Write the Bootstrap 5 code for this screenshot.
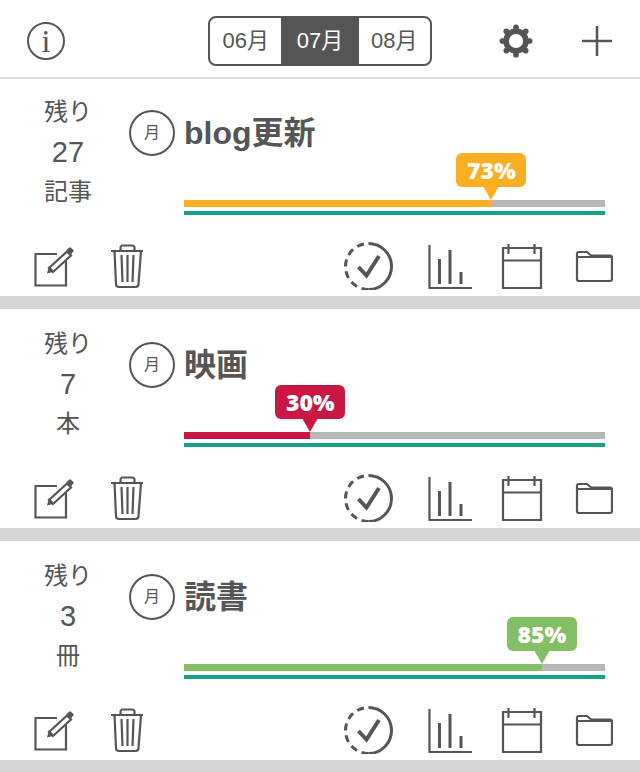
<!DOCTYPE html>
<html lang="en">
<head>
    <meta charset="UTF-8">
    <meta name="viewport" content="width=device-width, initial-scale=1.0">
    <title>Goals</title>
    <link href="https://cdn.jsdelivr.net/npm/bootstrap@5.3.1/dist/css/bootstrap.min.css" rel="stylesheet">
    <style>
        body {
            font-family: "Liberation Sans", "Noto Sans CJK JP", sans-serif;
            color: #555;
            background: #fff;
            overflow: hidden;
        }

        .top-bar {
            height: 79px;
            padding-left: 27px;
            padding-top: 4px;
            border-bottom: 2px solid #ddd;
        }

        .info-btn {
            width: 38px;
            height: 38px;
            border: 2px solid #555;
            font-family: "Liberation Serif", serif;
            font-size: 32px;
            line-height: 1;
        }

        .month-group {
            width: 224px;
            height: 50px;
            margin-left: 143px;
        }

        .month-btn {
            --bs-btn-padding-x: 0;
            --bs-btn-padding-y: 0;
            --bs-btn-font-size: 22px;
            --bs-btn-color: #555;
            --bs-btn-border-color: #555;
            --bs-btn-border-width: 2px;
            --bs-btn-border-radius: 8px;
            --bs-btn-active-bg: #555;
            --bs-btn-active-color: #fff;
            --bs-btn-active-border-color: #555;
        }

        .gear-icon {
            margin-left: 67px;
        }

        .plus-icon {
            margin-left: 49px;
        }

        .goal-card {
            height: 232px;
            border-bottom: 13px solid #d6d6d6;
            padding-top: 15px;
        }

        .goal-card.is-first {
            height: 230px;
            padding-top: 13px;
        }

        .remain-col {
            width: 136px;
            font-size: 24px;
            line-height: 40px;
        }

        .remain-num {
            font-size: 29px;
        }

        .goal-main {
            width: 477px;
            margin-left: -8px;
            padding-top: 18px;
        }

        .cycle-mark {
            width: 46px;
            height: 46px;
            margin-left: 1px;
            border: 2px solid #555;
            font-size: 16px;
        }

        .goal-name {
            margin: 0 0 0 9px;
            font-size: 32px;
            font-weight: 700;
            color: #555;
        }

        .bars {
            margin-top: 44px;
            margin-left: 56px;
        }

        .goal-progress {
            --bs-progress-height: 7px;
            --bs-progress-border-radius: 0;
            --bs-progress-bg: #b7b7b7;
        }

        .month-line {
            --bs-progress-height: 4px;
            --bs-progress-border-radius: 0;
            --bs-progress-bar-bg: #17a085;
            margin-top: 4px;
        }

        .tone-orange {
            --tone: #fbae22;
        }

        .tone-red {
            --tone: #cb1743;
        }

        .tone-green {
            --tone: #83c065;
        }

        .goal-progress .progress-bar {
            background: var(--tone);
        }

        .pct-tip {
            top: -47px;
            width: 70px;
            height: 34px;
            transform: translateX(-50%);
            background: var(--tone);
            border-radius: 6px;
            color: #fff;
            font-family: "Open Sans", sans-serif;
            font-weight: 800;
            font-size: 23px;
            line-height: 34px;
            text-align: center;
        }

        .pct-tip::after {
            content: "";
            position: absolute;
            left: 27px;
            top: 33px;
            border: 8px solid transparent;
            border-bottom-width: 0;
            border-top: 14px solid var(--tone);
        }

        .tool-row {
            margin-top: 27px;
            padding: 0 27px 0 33px;
        }

        .tool-row svg {
            display: block;
        }

        .line-icon {
            fill: none;
            stroke: #555;
            stroke-width: 2.2;
        }

        .line-heavy {
            stroke-width: 3;
        }

        .line-dash {
            stroke-width: 3;
            stroke-dasharray: 7 5;
        }

        .line-tick {
            stroke-width: 4;
        }
    </style>
</head>

<body>
    <svg class="d-none" xmlns="http://www.w3.org/2000/svg">
        <symbol id="i-edit" viewBox="33 242 57 48">
            <path class="line-icon" d="M57 254H35.5V285.5H66V261"/>
            <path class="line-icon" d="M49 268L67 251.500L71 255.500L53 272Z"/>
            <path d="M47 273.500L49 266L54.500 271.500ZM66.500 250L70 247L74 250.500L71 254.500Z" fill="#555"/>
        </symbol>
        <symbol id="i-trash" viewBox="90 242 55 48">
            <path class="line-icon" d="M111 251H143M114.500 251L116 284Q116 287 119 287H135.500Q138.500 287 138.500 284L141 251"/>
            <path class="line-icon" d="M120.500 251V248Q120.500 245.500 123 245.500H132Q134.500 245.500 134.500 248V251M121.500 255L122.500 282M127.500 255V282M133.500 255L132.500 282"/>
        </symbol>
        <symbol id="i-check" viewBox="344 242 66 48">
            <path class="line-icon line-heavy" d="M368.500 243.500A23 23 0 0 1 368.500 289.500"/>
            <path class="line-icon line-dash" d="M368.500 289.500A23 23 0 0 1 368.500 243.500"/>
            <path class="line-icon line-tick" d="M358.500 267L366.500 275.500L379 256"/>
        </symbol>
        <symbol id="i-chart" viewBox="410 242 77 48">
            <path class="line-icon" d="M429.500 245V288H472"/>
            <path class="line-icon line-heavy" d="M439.500 259V284M450 250V284M461 272V284"/>
        </symbol>
        <symbol id="i-cal" viewBox="487 242 72 48">
            <path class="line-icon" d="M503 248H541V288H503ZM503 260.500H541M508.500 244V254M534.500 244V254"/>
        </symbol>
        <symbol id="i-folder" viewBox="559 242 54 48">
            <path class="line-icon" d="M577 254V279Q577 281 579 281H610Q612 281 612 279V257Q612 255.500 610 255.500H591L587 252H579Q577 252 577 254ZM577 257H612"/>
        </symbol>
    </svg>

    <header class="top-bar d-flex align-items-center">
        <span class="info-btn rounded-circle d-flex align-items-center justify-content-center">i</span>
        <div class="btn-group month-group" role="group">
            <button type="button" class="btn month-btn">06月</button>
            <button type="button" class="btn month-btn active">07月</button>
            <button type="button" class="btn month-btn">08月</button>
        </div>
        <svg class="gear-icon" width="34" height="34" viewBox="0 0 36 36">
            <circle cx="18" cy="18" r="10.500" fill="none" stroke="#555" stroke-width="6"/>
            <g fill="#555">
                <circle cx="18" cy="3.500" r="3"/>
                <circle cx="18" cy="32.500" r="3"/>
                <circle cx="3.500" cy="18" r="3"/>
                <circle cx="32.500" cy="18" r="3"/>
                <circle cx="7.750" cy="7.750" r="3"/>
                <circle cx="28.250" cy="7.750" r="3"/>
                <circle cx="7.750" cy="28.250" r="3"/>
                <circle cx="28.250" cy="28.250" r="3"/>
            </g>
        </svg>
        <svg class="plus-icon" width="30" height="30" viewBox="0 0 30 30">
            <path d="M0 15H30M15 0V30" stroke="#555" stroke-width="2.500"/>
        </svg>
    </header>

    <section class="goal-card is-first tone-orange">
        <div class="d-flex">
            <div class="remain-col text-center">
                <div>残り</div>
                <div class="remain-num">27</div>
                <div>記事</div>
            </div>
            <div class="goal-main">
                <div class="d-flex align-items-center">
                    <span class="cycle-mark rounded-circle d-flex align-items-center justify-content-center">月</span>
                    <h2 class="goal-name">blog更新</h2>
                </div>
                <div class="bars position-relative">
                    <div class="pct-tip position-absolute" style="left: 73%">73%</div>
                    <div class="progress goal-progress"><div class="progress-bar" style="width: 73%"></div></div>
                    <div class="progress month-line"><div class="progress-bar" style="width: 100%"></div></div>
                </div>
            </div>
        </div>
        <div class="tool-row d-flex">
            <svg width="57" height="48"><use href="#i-edit"/></svg>
            <svg width="55" height="48"><use href="#i-trash"/></svg>
            <div class="ms-auto d-flex">
                <svg width="66" height="48"><use href="#i-check"/></svg>
                <svg width="77" height="48"><use href="#i-chart"/></svg>
                <svg width="72" height="48"><use href="#i-cal"/></svg>
                <svg width="54" height="48"><use href="#i-folder"/></svg>
            </div>
        </div>
    </section>

    <section class="goal-card tone-red">
        <div class="d-flex">
            <div class="remain-col text-center">
                <div>残り</div>
                <div class="remain-num">7</div>
                <div>本</div>
            </div>
            <div class="goal-main">
                <div class="d-flex align-items-center">
                    <span class="cycle-mark rounded-circle d-flex align-items-center justify-content-center">月</span>
                    <h2 class="goal-name">映画</h2>
                </div>
                <div class="bars position-relative">
                    <div class="pct-tip position-absolute" style="left: 30%">30%</div>
                    <div class="progress goal-progress"><div class="progress-bar" style="width: 30%"></div></div>
                    <div class="progress month-line"><div class="progress-bar" style="width: 100%"></div></div>
                </div>
            </div>
        </div>
        <div class="tool-row d-flex">
            <svg width="57" height="48"><use href="#i-edit"/></svg>
            <svg width="55" height="48"><use href="#i-trash"/></svg>
            <div class="ms-auto d-flex">
                <svg width="66" height="48"><use href="#i-check"/></svg>
                <svg width="77" height="48"><use href="#i-chart"/></svg>
                <svg width="72" height="48"><use href="#i-cal"/></svg>
                <svg width="54" height="48"><use href="#i-folder"/></svg>
            </div>
        </div>
    </section>

    <section class="goal-card tone-green">
        <div class="d-flex">
            <div class="remain-col text-center">
                <div>残り</div>
                <div class="remain-num">3</div>
                <div>冊</div>
            </div>
            <div class="goal-main">
                <div class="d-flex align-items-center">
                    <span class="cycle-mark rounded-circle d-flex align-items-center justify-content-center">月</span>
                    <h2 class="goal-name">読書</h2>
                </div>
                <div class="bars position-relative">
                    <div class="pct-tip position-absolute" style="left: 85%">85%</div>
                    <div class="progress goal-progress"><div class="progress-bar" style="width: 85%"></div></div>
                    <div class="progress month-line"><div class="progress-bar" style="width: 100%"></div></div>
                </div>
            </div>
        </div>
        <div class="tool-row d-flex">
            <svg width="57" height="48"><use href="#i-edit"/></svg>
            <svg width="55" height="48"><use href="#i-trash"/></svg>
            <div class="ms-auto d-flex">
                <svg width="66" height="48"><use href="#i-check"/></svg>
                <svg width="77" height="48"><use href="#i-chart"/></svg>
                <svg width="72" height="48"><use href="#i-cal"/></svg>
                <svg width="54" height="48"><use href="#i-folder"/></svg>
            </div>
        </div>
    </section>

    <script src="https://cdn.jsdelivr.net/npm/bootstrap@5.3.1/dist/js/bootstrap.bundle.min.js"></script>
</body>

</html>
